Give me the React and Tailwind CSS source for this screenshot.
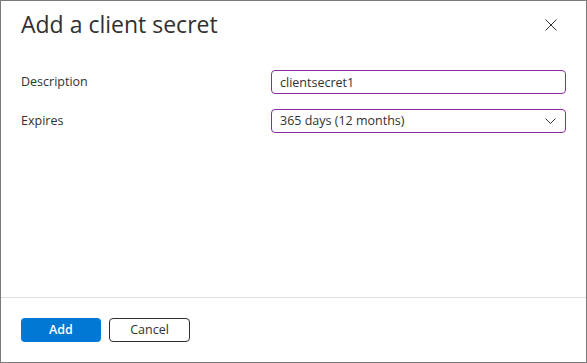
import { useState } from 'react';

const font = { fontFamily: '"Segoe UI", "Open Sans", "Noto Sans", sans-serif' };

const App = () => {
  const [description, setDescription] = useState('clientsecret1');

  return (
    <main
      className="flex h-[363px] w-[587px] flex-col border border-[#7a7a7a] bg-white text-[#323130]"
      style={font}
    >
      <header className="flex items-start justify-between pl-5 pr-[29px] pt-[7px]">
        <h1 className="text-[23px] font-medium leading-[32px]">Add a client secret</h1>
        <button className="mt-[11px] text-[#323130]" title="Close">
          <svg width="12" height="12" viewBox="0 0 12 12" fill="none" stroke="currentColor" strokeWidth="1">
            <path d="M0.5 0.5L11.5 11.5M11.5 0.5L0.5 11.5" />
          </svg>
        </button>
      </header>

      <section className="flex-1 px-5 pt-[30px]">
        <div className="grid grid-cols-[250px_1fr] items-center gap-y-[15px] text-[12.5px]">
          <label>Description</label>
          <input
            value={description}
            onChange={e => setDescription(e.target.value)}
            className="h-6 w-full rounded-sm border border-[#8a2da5] px-2 text-[12.5px] text-[#323130] outline-none"
          />
          <label>Expires</label>
          <div className="flex h-6 w-full items-center justify-between rounded-sm border border-[#8a2da5] pl-2 pr-[9px]">
            <span>365 days (12 months)</span>
            <svg width="11" height="6" viewBox="0 0 11 6" fill="none" stroke="#323130" strokeWidth="1">
              <path d="M0.5 0.5L5.5 5.5L10.5 0.5" />
            </svg>
          </div>
        </div>
      </section>

      <footer className="flex h-[65px] items-start gap-2 border-t border-[#e1dfdd] px-5 pt-5 text-[12.5px]">
        <button className="h-6 w-20 rounded-sm bg-[#0078d4] font-semibold text-white">Add</button>
        <button className="h-6 w-[81px] rounded-sm border border-[#323130] text-[#323130]">Cancel</button>
      </footer>
    </main>
  );
};

export default App;
